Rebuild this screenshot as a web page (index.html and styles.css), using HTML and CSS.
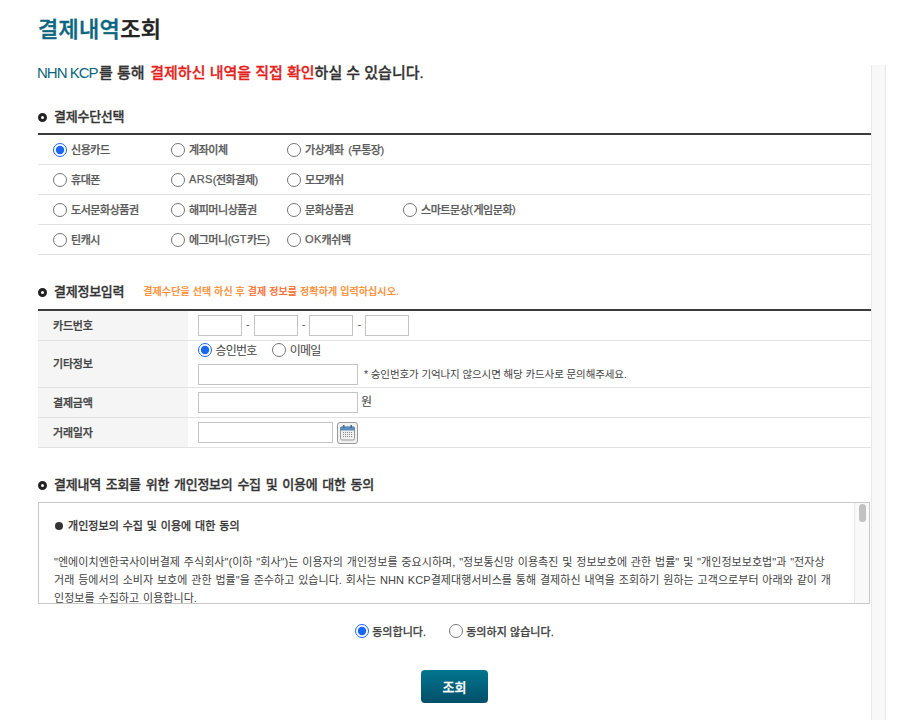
FILE: index.html
```html
<!DOCTYPE html>
<html lang="ko">
<head>
<meta charset="utf-8">
<title>결제내역조회</title>
<link rel="stylesheet" href="styles.css">
</head>
<body>
<header class="page-head">
  <h1 class="title"><span class="teal">결제내역</span>조회</h1>
</header>
<div class="frame">
  <main class="content">
    <p class="intro"><span class="teal brand">NHN KCP</span>를 통해 <span class="red">결제하신 내역을 직접 확인</span>하실 수 있습니다.</p>

    <section class="section">
      <h2 class="sec-title"><i class="bullet"></i>결제수단선택</h2>
      <div class="methods">
        <div class="method-row">
          <label class="method"><input type="radio" name="pay" checked>신용카드</label>
          <label class="method"><input type="radio" name="pay">계좌이체</label>
          <label class="method"><input type="radio" name="pay">가상계좌 (무통장)</label>
        </div>
        <div class="method-row">
          <label class="method"><input type="radio" name="pay">휴대폰</label>
          <label class="method"><input type="radio" name="pay"><span class="lat">ARS</span>(전화결제)</label>
          <label class="method"><input type="radio" name="pay">모모캐쉬</label>
        </div>
        <div class="method-row">
          <label class="method"><input type="radio" name="pay">도서문화상품권</label>
          <label class="method"><input type="radio" name="pay">해피머니상품권</label>
          <label class="method"><input type="radio" name="pay">문화상품권</label>
          <label class="method"><input type="radio" name="pay">스마트문상<span class="lat">(</span>게임문화<span class="lat">)</span></label>
        </div>
        <div class="method-row">
          <label class="method"><input type="radio" name="pay">틴캐시</label>
          <label class="method"><input type="radio" name="pay">에그머니(<span class="lat">GT</span>카드)</label>
          <label class="method"><input type="radio" name="pay"><span class="lat">OK</span>캐쉬백</label>
        </div>
      </div>
    </section>

    <section class="section">
      <h2 class="sec-title"><i class="bullet"></i>결제정보입력<small class="hint">결제수단을 선택 하신 후 <b>결제 정보를</b> 정확하게 입력하십시오.</small></h2>
      <div class="form">
        <div class="form-row">
          <div class="form-label">카드번호</div>
          <div class="form-field">
            <input class="text card" type="text"><span class="dash">-</span><input class="text card" type="text"><span class="dash">-</span><input class="text card" type="text"><span class="dash">-</span><input class="text card" type="text">
          </div>
        </div>
        <div class="form-row tall">
          <div class="form-label">기타정보</div>
          <div class="form-field stack">
            <div class="choice-line">
              <label class="choice"><input type="radio" name="etc" checked>승인번호</label>
              <label class="choice"><input type="radio" name="etc">이메일</label>
            </div>
            <div class="input-line">
              <input class="text wide" type="text"><span class="note">* 승인번호가 기억나지 않으시면 해당 카드사로 문의해주세요.</span>
            </div>
          </div>
        </div>
        <div class="form-row">
          <div class="form-label">결제금액</div>
          <div class="form-field"><input class="text wide" type="text"><span class="unit">원</span></div>
        </div>
        <div class="form-row">
          <div class="form-label">거래일자</div>
          <div class="form-field">
            <input class="text date" type="text">
            <button class="cal" type="button" aria-label="달력">
              <svg width="17" height="17" viewBox="0 0 17 17">
                <rect x="1.5" y="3" width="14" height="13" rx="1.5" fill="#f0f0f0" stroke="#9a9a9a"/>
                <path d="M1 6.5V4a1.5 1.5 0 0 1 1.5-1.5h12A1.5 1.5 0 0 1 16 4v2.5z" fill="#5f8bbb"/>
                <rect x="4" y="1" width="1.5" height="3" fill="#3f6b9c"/>
                <rect x="11.5" y="1" width="1.5" height="3" fill="#3f6b9c"/>
                <path d="M4 8.5h1M6 8.5h1M8 8.5h1M10 8.5h1M12 8.5h1M4 10.5h1M6 10.5h1M8 10.5h1M10 10.5h1M12 10.5h1M4 12.5h1M6 12.5h1M8 12.5h1M10 12.5h1M12 12.5h1" stroke="#8a8a8a" stroke-width="1" fill="none"/>
              </svg>
            </button>
          </div>
        </div>
      </div>
    </section>

    <section class="section">
      <h2 class="sec-title wide-words"><i class="bullet"></i>결제내역 조회를 위한 개인정보의 수집 및 이용에 대한 동의</h2>
      <div class="terms">
        <div class="terms-text">
          <p class="terms-head"><i class="dot"></i>개인정보의 수집 및 이용에 대한 동의</p>
          <p class="terms-body">"엔에이치엔한국사이버결제 주식회사"(이하 "회사")는 이용자의 개인정보를 중요시하며, "정보통신망 이용촉진 및 정보보호에 관한 법률" 및 "개인정보보호법"과 "전자상거래 등에서의 소비자 보호에 관한 법률"을 준수하고 있습니다. 회사는 NHN KCP결제대행서비스를 통해 결제하신 내역을 조회하기 원하는 고객으로부터 아래와 같이 개인정보를 수집하고 이용합니다.</p>
        </div>
        <div class="terms-bar"><div class="terms-thumb"></div></div>
      </div>
      <div class="agree">
        <label class="agree-item"><input type="radio" name="agree" checked>동의합니다.</label>
        <label class="agree-item"><input type="radio" name="agree">동의하지 않습니다.</label>
      </div>
      <div class="actions"><button class="submit" type="button">조회</button></div>
    </section>
  </main>
  <div class="rail"></div>
</div>
</body>
</html>
```
FILE: styles.css
```css
* { box-sizing: border-box; }
html, body { margin: 0; height: 100%; overflow: hidden; background: #fff; }
body {
  display: flex;
  flex-direction: column;
  height: 720px;
  font-family: "Liberation Sans", "Noto Sans CJK KR", sans-serif;
  color: #333;
}
.teal { color: #0b6680; }
.red { color: #e3231b; }

.page-head { height: 65px; padding: 16px 0 0 38px; flex: none; }
.title { margin: 0; font-size: 22px; line-height: 28px; font-weight: 500; letter-spacing: 0.3px; color: #222; -webkit-text-stroke: 0.45px currentColor; }

.frame { flex: 1; display: flex; padding-left: 38px; min-height: 0; }
.content { width: 833px; flex: none; }
.rail { width: 15px; flex: none; background: #f8f8f8; border-left: 1px solid #e8e8e8; border-right: 1px solid #e8e8e8; }

.intro { margin: 0 0 29px -1px; height: 15px; font-size: 15px; line-height: 15px; font-weight: 500; color: #333; white-space: nowrap; letter-spacing: 0; -webkit-text-stroke: 0.3px currentColor; }
.intro .red { margin-left: 1.5px; }
.brand { margin-right: 1.5px; letter-spacing: -1px; -webkit-text-stroke: 0; }

.section { margin-bottom: 29px; }
.section:last-child { margin-bottom: 0; }
.sec-title { display: flex; align-items: center; height: 16px; margin: 0 0 8px; font-size: 13px; line-height: 16px; font-weight: 500; color: #333; letter-spacing: -0.25px; -webkit-text-stroke: 0.3px currentColor; }
.wide-words { word-spacing: 1.5px; }
.bullet { width: 9px; height: 9px; margin-right: 7px; border: 3px solid #222; border-radius: 50%; flex: none; }
.hint { margin-left: 19px; font-size: 10px; font-weight: 500; color: #ff8b2e; letter-spacing: 0.1px; -webkit-text-stroke: 0.2px currentColor; }
.hint b { font-weight: 500; color: #ff6a2c; }

.methods { border-top: 2px solid #3c3c3c; }
.method-row { display: grid; grid-template-columns: 118px 116px 116px 1fr; height: 30px; padding-left: 15px; align-items: center; border-bottom: 1px solid #e2e2e2; }
.method { display: flex; align-items: center; padding-bottom: 2px; font-size: 11px; font-weight: 500; color: #5a5a5a; letter-spacing: -0.45px; word-spacing: 2px; white-space: nowrap; -webkit-text-stroke: 0.25px currentColor; }
.lat { letter-spacing: 0.35px; }
input[type="radio"] { width: 14px; height: 14px; margin: 0; flex: none; accent-color: #1a66f5; }
.method input { margin: 0 4px -2px 0; }

.form { border-top: 2px solid #3c3c3c; margin-top: 9px; }
.form-row { display: flex; height: 30px; border-bottom: 1px solid #e2e2e2; }
.form-row.tall { height: 47px; }
.form-label { width: 150px; flex: none; padding: 0 0 2px 15px; display: flex; align-items: center; background: #f5f5f5; font-size: 11px; font-weight: 500; color: #444; letter-spacing: -0.2px; -webkit-text-stroke: 0.3px currentColor; }
.form-field { display: flex; align-items: center; padding-left: 10px; flex: 1; font-size: 11px; color: #444; }
.form-field.stack { flex-direction: column; align-items: flex-start; }
.text { height: 21px; padding: 0 4px; border: 1px solid #c4c4c4; background: #fff; border-radius: 0; outline: none; }
.card { width: 44px; }
.dash { width: 11.7px; padding-bottom: 4px; text-align: center; font-size: 11px; color: #555; }
.wide { width: 160px; }
.date { width: 135px; }
.choice-line { display: flex; gap: 15.5px; height: 18px; margin-top: 0; align-items: center; }
.choice { display: flex; align-items: center; padding-bottom: 2px; font-size: 12px; color: #444; letter-spacing: -0.75px; white-space: nowrap; }
.choice input { margin: 0 3.5px -2px 0; }
.input-line { display: flex; align-items: center; margin-top: 5px; }
.note { margin-left: 6px; padding-bottom: 3px; font-size: 10.5px; color: #444; letter-spacing: -0.1px; white-space: nowrap; }
.unit { margin-left: 3px; padding-bottom: 5px; font-size: 12px; color: #444; }
.cal { width: 21px; height: 22px; margin-left: 4px; padding: 0; display: flex; align-items: center; justify-content: center; background: #f1f1f1; border: 1px solid #999; border-radius: 3px; }

.terms { display: flex; width: 832px; height: 102px; margin-top: 9px; border: 1px solid #c8c8c8; font-size: 11px; line-height: 18px; color: #444; }
.terms-text { flex: 1; min-width: 0; padding: 14px 21px 0 15px; overflow: hidden; word-break: break-all; letter-spacing: 0.05px; word-spacing: 0.7px; }
.terms-bar { width: 15px; flex: none; padding: 1px 3px 0 4px; background: #f9f9f9; border-left: 1px solid #e8e8e8; }
.terms-thumb { height: 18px; background: #c1c1c1; border-radius: 4px; }
.terms-head { display: flex; align-items: center; margin: 0 0 18px; color: #333; -webkit-text-stroke: 0.35px currentColor; }
.dot { width: 8px; height: 8px; margin: 0 5px 0 1px; border-radius: 50%; background: #333; flex: none; }
.terms-body { margin: 0; }

.agree { display: flex; justify-content: center; gap: 23px; height: 14px; margin-top: 20px; }
.agree-item { display: flex; align-items: center; font-size: 11px; font-weight: 500; color: #444; letter-spacing: 0.06px; white-space: nowrap; -webkit-text-stroke: 0.25px currentColor; }
.agree-item input { margin-right: 3px; }

.actions { display: flex; justify-content: center; margin-top: 32px; }
.submit { width: 67px; height: 33px; padding: 0; border: 0; border-radius: 4px; background: linear-gradient(#02758f, #014f69); color: #fff; font-family: inherit; font-size: 13px; font-weight: 500; -webkit-text-stroke: 0.3px currentColor; }
```
